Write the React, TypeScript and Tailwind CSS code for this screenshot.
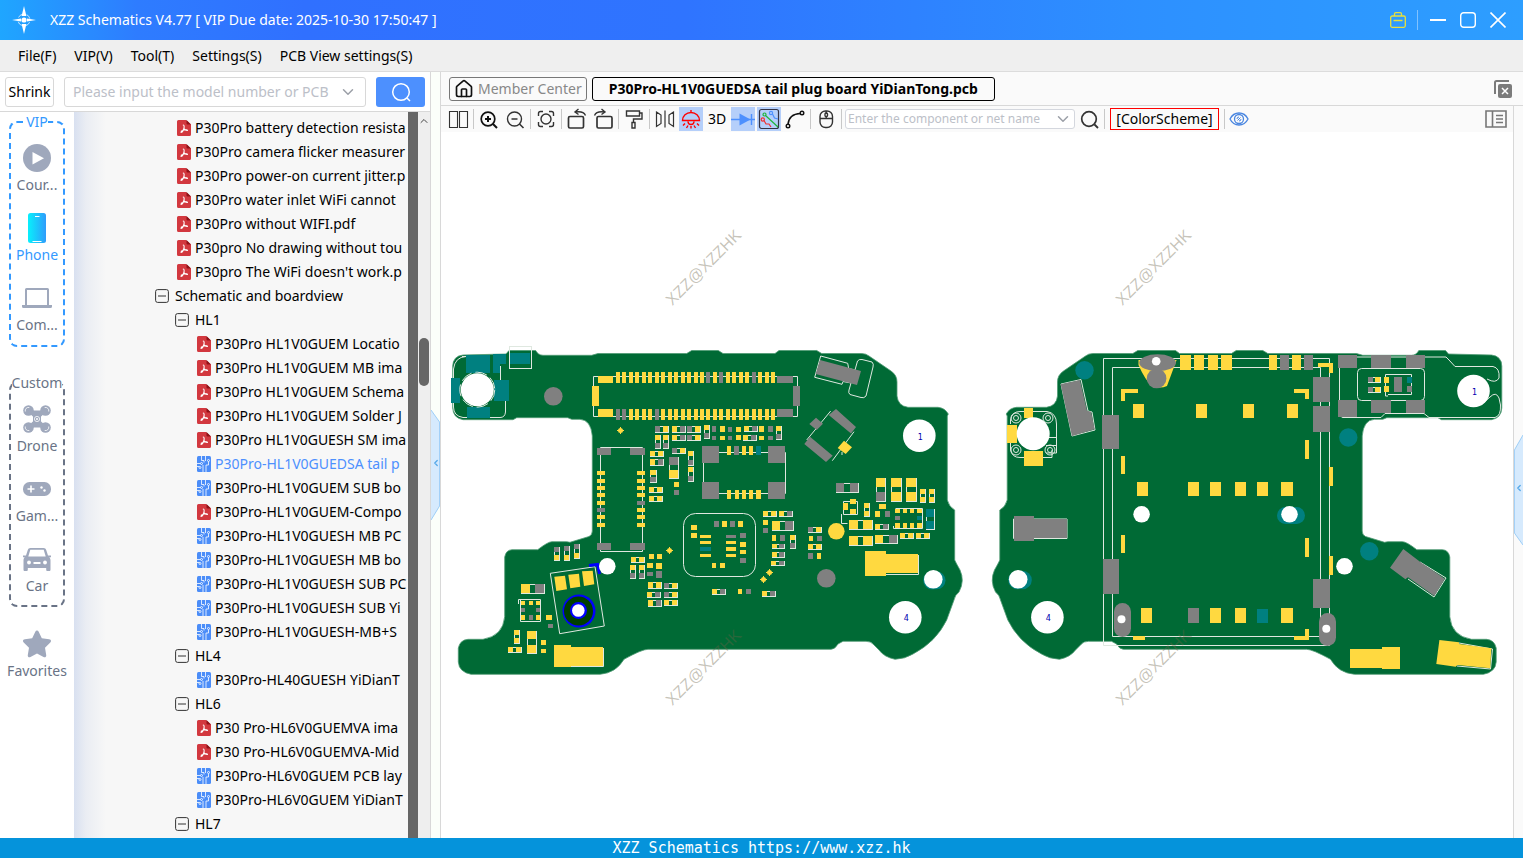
import React, { useState } from 'react';
import { ChevronDown, ChevronLeft, ChevronUp, House } from 'lucide-react';
import clsx from 'clsx';

type TreeKind = 'pdf' | 'pcb' | 'folder';

interface TreeItem {
    kind: TreeKind;
    label: string;
    level: number;
}

const TREE: TreeItem[] = [
    { kind: 'pdf', level: 1, label: 'P30Pro battery detection resista' },
    { kind: 'pdf', level: 1, label: 'P30Pro camera flicker measurer' },
    { kind: 'pdf', level: 1, label: 'P30Pro power-on current jitter.p' },
    { kind: 'pdf', level: 1, label: 'P30Pro water inlet WiFi cannot' },
    { kind: 'pdf', level: 1, label: 'P30Pro without WIFI.pdf' },
    { kind: 'pdf', level: 1, label: 'P30pro No drawing without tou' },
    { kind: 'pdf', level: 1, label: "P30pro The WiFi doesn't work.p" },
    { kind: 'folder', level: 0, label: 'Schematic and boardview' },
    { kind: 'folder', level: 1, label: 'HL1' },
    { kind: 'pdf', level: 2, label: 'P30Pro HL1V0GUEM Locatio' },
    { kind: 'pdf', level: 2, label: 'P30Pro HL1V0GUEM MB ima' },
    { kind: 'pdf', level: 2, label: 'P30Pro HL1V0GUEM Schema' },
    { kind: 'pdf', level: 2, label: 'P30Pro HL1V0GUEM Solder J' },
    { kind: 'pdf', level: 2, label: 'P30Pro HL1V0GUESH SM ima' },
    { kind: 'pcb', level: 2, label: 'P30Pro-HL1V0GUEDSA tail p' },
    { kind: 'pcb', level: 2, label: 'P30Pro-HL1V0GUEM SUB bo' },
    { kind: 'pdf', level: 2, label: 'P30Pro-HL1V0GUEM-Compo' },
    { kind: 'pcb', level: 2, label: 'P30Pro-HL1V0GUESH MB PC' },
    { kind: 'pcb', level: 2, label: 'P30Pro-HL1V0GUESH MB bo' },
    { kind: 'pcb', level: 2, label: 'P30Pro-HL1V0GUESH SUB PC' },
    { kind: 'pcb', level: 2, label: 'P30Pro-HL1V0GUESH SUB Yi' },
    { kind: 'pcb', level: 2, label: 'P30Pro-HL1V0GUESH-MB+S' },
    { kind: 'folder', level: 1, label: 'HL4' },
    { kind: 'pcb', level: 2, label: 'P30Pro-HL40GUESH YiDianT' },
    { kind: 'folder', level: 1, label: 'HL6' },
    { kind: 'pdf', level: 2, label: 'P30 Pro-HL6V0GUEMVA ima' },
    { kind: 'pdf', level: 2, label: 'P30 Pro-HL6V0GUEMVA-Mid' },
    { kind: 'pcb', level: 2, label: 'P30Pro-HL6V0GUEM PCB lay' },
    { kind: 'pcb', level: 2, label: 'P30Pro-HL6V0GUEM YiDianT' },
    { kind: 'folder', level: 1, label: 'HL7' },
];

const MENUS = ['File(F)', 'VIP(V)', 'Tool(T)', 'Settings(S)', 'PCB View settings(S)'];

/* ---------- small icons ---------- */

function LogoIcon() {
    return (
        <svg viewBox="0 0 24 28" className="h-7 w-6" fill="#fff">
            <path d="M12 0l2.4 10h-4.8zM12 28l2.4-10h-4.8zM0 14l9-1.6v3.2zM24 14l-9-1.6v3.2z" />
            <circle cx="12" cy="14" r="2.6" />
            <circle cx="12" cy="14" r="6" fill="none" stroke="#fff" strokeOpacity=".7" strokeDasharray="5 4.4" strokeDashoffset="-2.2" />
        </svg>
    );
}

function PdfIcon() {
    return (
        <svg viewBox="0 0 14 16" className="h-4 w-[14px] shrink-0">
            <path d="M1.5 0H9l5 4.5v10A1.5 1.5 0 0 1 12.500 16h-11A1.500 1.500 0 0 1 0 14.500v-13A1.500 1.500 0 0 1 1.500 0z" fill="#d2383f" />
            <path d="M9.500 0L14 4.500H10.500a1 1 0 0 1-1-1z" fill="#8f1218" />
            <path d="M6.300 5c1.200 0 .9 2.700.4 4-.5 1.400-1.700 3.500-2.700 3.500M6.900 8.600c.8 1.200 2 2 3.600 1.800M4.200 11.300c1.600-1.200 3.600-1.800 5.800-1.500" fill="none" stroke="#fff" strokeWidth="1.100" strokeLinecap="round" />
        </svg>
    );
}

function PcbIcon() {
    return (
        <svg viewBox="0 0 14 16" className="h-4 w-[14px] shrink-0">
            <rect width="14" height="16" rx="1.500" fill="#4b8df8" />
            <g fill="none" stroke="#fff" strokeWidth=".8">
                <path d="M4.500 0v4.500h2.500v2M0 7.500h3.500M8.500 0v5M11.500 5.500v3.500h-2.500V16M6 9v7M0 10.500h2.500" />
                <circle cx="11.500" cy="4.500" r="1" />
                <circle cx="4.500" cy="7.500" r="1" />
                <circle cx="3" cy="11.500" r="1" />
            </g>
        </svg>
    );
}

function MinusBox() {
    return (
        <svg viewBox="0 0 14 14" className="h-[14px] w-[14px] shrink-0" fill="none" stroke="#333">
            <rect x=".6" y=".6" width="12.800" height="12.800" rx="2" />
            <path d="M3 7h8" />
        </svg>
    );
}

function SideIcon({ name }: { name: string }) {
    switch (name) {
        case 'course':
            return (
                <svg viewBox="0 0 28 28" className="size-7">
                    <circle cx="14" cy="14" r="14" fill="#9fa8bc" />
                    <path d="M9.500 8v12.500L21 14.200z" fill="#fff" />
                </svg>
            );
        case 'phone':
            return (
                <svg viewBox="0 0 18 30" className="h-[30px] w-[18px]">
                    <defs>
                        <linearGradient id="ph">
                            <stop offset="0" stopColor="#08f0fc" />
                            <stop offset="1" stopColor="#2f9cfb" />
                        </linearGradient>
                    </defs>
                    <rect width="18" height="30" rx="2.500" fill="url(#ph)" />
                    <path d="M7 3.500h4.500M4.500 28.500h9" stroke="#fff" strokeWidth="1.200" />
                </svg>
            );
        case 'computer':
            return (
                <svg viewBox="0 0 30 20" className="h-5 w-[30px]" fill="#9fa8bc">
                    <path d="M4.500 0h21A1.500 1.500 0 0 1 27 1.500V17h3v1.500a1.500 1.500 0 0 1-1.500 1.500h-27A1.500 1.500 0 0 1 0 18.500V17h3V1.500A1.500 1.500 0 0 1 4.500 0zM5 2v15h20V2z" fillRule="evenodd" />
                </svg>
            );
        case 'drone':
            return (
                <svg viewBox="0 0 28 28" className="size-7" fill="#9fa8bc">
                    <circle cx="5.500" cy="5.500" r="5.300" />
                    <circle cx="22.500" cy="5.500" r="5.300" />
                    <circle cx="5.500" cy="22.500" r="5.300" />
                    <circle cx="22.500" cy="22.500" r="5.300" />
                    <path d="M5.500 5.500L11 10.500h6l5.500-5M5.500 22.500L11 17.500h6l5.500 5" stroke="#9fa8bc" strokeWidth="3" />
                    <path d="M10 10h8v8h-8z" />
                    <g fill="none" stroke="#fff" strokeWidth=".8">
                        <path d="M2.300 6.500a3.300 3.300 0 0 1 4-4M21.700 2.500a3.300 3.300 0 0 1 4 4M2.300 21.500a3.300 3.300 0 0 0 4 4M25.700 21.500a3.300 3.300 0 0 1-4 4" />
                        <circle cx="14" cy="14" r="2.600" />
                    </g>
                    <circle cx="14" cy="14" r="1" fill="#fff" />
                </svg>
            );
        case 'game':
            return (
                <svg viewBox="0 0 28 14" className="h-[14px] w-7">
                    <rect width="28" height="14" rx="6.500" fill="#9fa8bc" />
                    <path d="M4.500 7h7M8 3.500v7" stroke="#fff" strokeWidth="1.600" />
                    <circle cx="18.500" cy="5.500" r="1.200" fill="#fff" />
                    <circle cx="21.500" cy="8.500" r="1.200" fill="#fff" />
                </svg>
            );
        case 'car':
            return (
                <svg viewBox="0 0 28 23" className="h-[23px] w-7" fill="#9fa8bc">
                    <path d="M7.500 0h13c1.500 0 2.300.8 2.800 2.200L25 7.500h3v1.700h-1.700c.9.900 1.200 1.800 1.200 3V21.500c0 1-.5 1.500-1.300 1.500h-1.700c-.8 0-1.300-.5-1.300-1.500V20H4.800v1.500c0 1-.5 1.500-1.300 1.500H1.800C1 23 .5 22.500.5 21.500v-9.300c0-1.200.3-2.100 1.200-3H0V7.500h3l1.700-5.300C5.200.8 6 0 7.500 0zM7.300 1.800L5.300 8.500h17.400l-2-6.700z" fillRule="evenodd" />
                    <circle cx="6" cy="14.500" r="1.900" fill="#fff" />
                    <circle cx="22" cy="14.500" r="1.900" fill="#fff" />
                    <path d="M10.500 15h7" stroke="#fff" strokeWidth="2" />
                </svg>
            );
        default:
            return (
                <svg viewBox="0 0 28 28" className="size-7" fill="#9fa8bc">
                    <path d="M14 .5c.8 0 1.300.4 1.700 1.200l3.100 6.600 7.300 1c1.900.3 2.500 1.800 1.200 3.200L22 17.700l1.200 7.300c.3 1.900-1 2.900-2.700 2L14 23.600 7.500 27c-1.700.9-3-.1-2.700-2L6 17.700.7 12.500C-.6 11.100 0 9.600 1.900 9.300l7.300-1 3.100-6.600C12.700.9 13.200.5 14 .5z" />
                </svg>
            );
    }
}

interface SideItemProps {
    icon: string;
    label: string;
    active?: boolean;
}

function SideItem({ icon, label, active }: SideItemProps) {
    return (
        <button className="flex w-full flex-col items-center">
            <span className="flex h-[34px] items-center">
                <SideIcon name={icon} />
            </span>
            <span className={clsx('leading-5', active ? 'text-[#3399ff]' : 'text-[#697386]')}>{label}</span>
        </button>
    );
}

/* ---------- toolbar ---------- */

interface ToolProps {
    label: string;
    active?: boolean;
    children: React.ReactNode;
}

function Tool({ label, active, children }: ToolProps) {
    return (
        <button aria-label={label} className={clsx('flex size-6 shrink-0 items-center justify-center', active && 'bg-[#b5cffa]')}>
            <svg viewBox="0 0 24 24" className="size-6" fill="none" stroke="#333" strokeWidth="1.400">
                {children}
            </svg>
        </button>
    );
}

function Sep() {
    return <span className="mx-px h-5 w-px shrink-0 bg-[#c8c8c8]" />;
}

function Toolbar() {
    const [query, setQuery] = useState('');

    return (
        <div className="flex h-[26px] items-center gap-0.5 bg-[#fafafa] pl-[5px] pr-1.5">
            <Tool label="Split view">
                <path d="M3.500 4.500h8v16h-8zM13.500 4.500h8v16h-8z" strokeWidth="1.100" />
            </Tool>
            <Sep />
            <Tool label="Zoom in">
                <circle cx="11" cy="12" r="6.800" stroke="#111" strokeWidth="1.700" />
                <path d="M16 17l4 4M11 9v6M8 12h6" stroke="#111" strokeWidth="2" />
            </Tool>
            <Tool label="Zoom out">
                <circle cx="11.500" cy="12" r="7" />
                <path d="M16.500 17l4 4M8.500 12h6" strokeWidth="1.600" />
            </Tool>
            <Sep />
            <Tool label="Fit to window">
                <path d="M4.500 9V6.500a2 2 0 0 1 2-2H9M15 4.500h2.500a2 2 0 0 1 2 2V9M19.500 15v2.500a2 2 0 0 1-2 2H15M9 19.500H6.500a2 2 0 0 1-2-2V15" />
                <circle cx="12" cy="12" r="5" />
            </Tool>
            <Sep />
            <Tool label="Rotate left">
                <rect x="3.500" y="9.500" width="15" height="11.500" rx="1.500" strokeWidth="1.700" />
                <path d="M20.500 8.500C19 5 15 4.300 10.500 5M13.500 2l-3.500 3 3.500 2.500" />
            </Tool>
            <Tool label="Rotate right">
                <rect x="6" y="9.500" width="15" height="11.500" rx="1.500" strokeWidth="1.700" />
                <path d="M3.500 8.500C5 5 9 4.300 13.500 5M10.500 2l3.500 3-3.500 2.500" />
            </Tool>
            <Sep />
            <Tool label="Paint">
                <path d="M4.500 4h13v5h-13zM17.500 6H20v6h-8.500v4" />
                <path d="M10 15.500h3V21h-3z" />
            </Tool>
            <Sep />
            <Tool label="Mirror">
                <path d="M3.500 5l4.500 3v8.500l-4.500 3zM20.500 5L16 8v8.500l4.500 3zM12 3.500v17" strokeWidth="1.200" />
            </Tool>
            <Tool label="Light" active>
                <g stroke="#f00">
                    <path d="M3.500 13.500a8.500 8 0 0 1 17 0zM12 3v2.500M9 14.500a3 3 0 0 0 6 0M6 16.500L4 18.500M18 16.500l2 2M9 18.500l-1.500 2.500M15 18.500l1.500 2.500M12 19v2.500" strokeWidth="1.400" />
                </g>
            </Tool>
            <button className="size-6 shrink-0 text-center leading-6">3D</button>
            <Tool label="Diode" active>
                <path d="M0 12.500h24M20.500 7v11" stroke="#4d90fe" />
                <path d="M8.500 6.500v12l11-6z" fill="#4d90fe" stroke="none" />
            </Tool>
            <Tool label="Color nets" active>
                <g strokeWidth="1.200">
                    <rect x="2.500" y="2.500" width="19" height="19" rx="2" stroke="#334" />
                    <circle cx="7.500" cy="7.500" r="1.500" stroke="#1fb53a" />
                    <path d="M8.500 8.500L21 20" stroke="#1fb53a" />
                    <circle cx="14" cy="6" r="1.600" stroke="#4d90fe" />
                    <path d="M15.500 7l2 4 3.500 1" stroke="#4d90fe" />
                    <circle cx="5.800" cy="12.500" r="1.600" stroke="#f03030" />
                    <path d="M7 13.500l2 3.500h3l2 3" stroke="#f03030" />
                </g>
            </Tool>
            <Tool label="Curve">
                <path d="M5 17.500C5.500 11 10 6.800 17.500 6.500" stroke="#111" strokeWidth="1.500" />
                <circle cx="5" cy="19" r="1.800" stroke="#111" />
                <circle cx="19" cy="6" r="1.800" stroke="#111" />
            </Tool>
            <Sep />
            <Tool label="Mouse">
                <rect x="6" y="4" width="12.500" height="16.500" rx="5.500" />
                <path d="M6 11.500h12.500M12.200 4v3M12.200 9v2.500" />
                <rect x="11" y="6" width="2.500" height="3.500" rx="1" />
            </Tool>
            <Sep />
            <div className="flex h-5 w-[230px] shrink-0 items-center rounded-[3px] border border-[#d4d7de] bg-white px-0.5">
                <input
                    aria-label="Component or net name"
                    value={query}
                    onChange={(e) => setQuery(e.target.value)}
                    placeholder="Enter the component or net name"
                    className="min-w-0 flex-1 bg-transparent text-xs outline-none placeholder:text-[#bcc0c8]"
                />
                <button aria-label="Show history" className="ml-1">
                    <ChevronDown className="size-[18px] text-[#9ca0a8]" />
                </button>
            </div>
            <Tool label="Search">
                <circle cx="12" cy="12" r="7.300" strokeWidth="1.700" />
                <path d="M17.500 17.500l3.500 3.500" strokeWidth="1.800" />
            </Tool>
            <Sep />
            <button className="mx-0.5 h-[22px] w-[109px] shrink-0 border border-[#f00] text-center leading-5">[ColorScheme]</button>
            <Sep />
            <Tool label="Show layers">
                <g stroke="#4a86e0" strokeWidth="1.300">
                    <path d="M2 12c4-8 14-8 18 0-4 8-14 8-18 0z" />
                    <circle cx="11" cy="12" r="4.500" />
                    <path d="M9.500 13.500l3-3M9 12a2 2 0 0 1 2-2M13 12a2 2 0 0 1-2 2" strokeWidth="1" />
                </g>
            </Tool>
            <button aria-label="Side panel" className="ml-auto">
                <svg viewBox="0 0 22 18" className="h-[18px] w-[22px]" fill="none" stroke="#777" strokeWidth="1.600">
                    <path d="M1 1h20v16H1zM7.500 1v16M11 5.500h7M11 9h7M11 12.500h7" />
                </svg>
            </button>
        </div>
    );
}

/* ---------- board drawing ---------- */

const COLORS: Record<string, string> = { y: '#ffd940', g: '#808080', t: '#008080' };

type Pad = [number, number, number, number, string];
type Part = [number, number, number, number, string];

const OUTLINE =
    'M452.700 366Q453 356 463 355L506 354L509 350.500H535.700Q538 355 543 355.300H591.700L598 353.500H686.700L691.700 350.500H718.300L723 353.500H775L779 350.500H816.700L821.700 353.500H861.700Q866 353.500 869 356L891 371Q897 375 897 382V396Q898 406 908 407.300H938Q945 408 948.300 414L947.300 416V500Q949 507 954.700 510V560Q956 563 960 570Q965 581 959 592Q955 595 954 600L946.700 620Q936 642 913 654Q905 659 895 659.300Q884 657 879 650L873 644Q871 641.500 866 641.300H843L838 644Q835 649.300 831 649.300H648Q642 649.300 624 659.300Q616 673 600 674.300H471Q459 672 458.300 662V648Q460 640 468 639.300H483Q503 636 504.700 616.700V557Q506 550 512 549.700H537.700Q548 541.700 552 541.700H566.700L570 542.300L589 536.500Q592.300 535 592.300 531V436Q591 420 580 419.300H571.700L567.700 417.700H516.700L513 419.700H463Q453 418 452.700 408Z';

// two-pad parts: x, y, w, h and the colours of both pads
const PARTS: Part[] = [
    [655, 426, 14, 7, 'gy'], [672, 426, 14, 7, 'yg'], [687, 426, 14, 7, 'gy'], [672, 435, 14, 6, 'yg'],
    [687, 435, 14, 6, 'gy'], [704, 425, 6, 14, 'yg'], [655, 435, 6, 14, 'yg'], [663, 435, 6, 14, 'yg'],
    [650, 451, 14, 6, 'yy'], [650, 459, 14, 7, 'yg'], [672, 448, 14, 6, 'gy'], [688, 451, 6, 15, 'yg'],
    [688, 467, 6, 15, 'yg'], [669, 457, 10, 22, 'gy'], [650, 470, 7, 13, 'yg'], [649, 487, 14, 6, 'yy'],
    [649, 496, 14, 6, 'yy'], [744, 426, 14, 6, 'yg'], [776, 426, 6, 14, 'yg'], [743, 435, 14, 6, 'yg'],
    [836, 483, 23, 10, 'gg'], [876, 478, 10, 24, 'yg'], [891, 478, 11, 24, 'yy'], [906, 478, 11, 24, 'yy'],
    [920, 489, 6, 14, 'yy'], [929, 489, 6, 14, 'yy'], [864, 503, 6, 14, 'yy'], [763, 511, 14, 6, 'yy'],
    [779, 511, 14, 6, 'yg'], [772, 521, 22, 10, 'yg'], [790, 535, 6, 14, 'yg'], [772, 544, 13, 5, 'yg'],
    [772, 552, 13, 6, 'yg'], [771, 561, 14, 5, 'yg'], [808, 527, 14, 6, 'gy'], [808, 544, 14, 6, 'yy'],
    [849, 520, 24, 10, 'yy'], [849, 536, 24, 10, 'yy'], [875, 524, 14, 6, 'yg'], [875, 535, 23, 9, 'yg'],
    [900, 533, 14, 6, 'yy'], [916, 533, 14, 6, 'yy'], [712, 589, 14, 6, 'yg'], [762, 591, 14, 6, 'yg'],
    [554, 547, 6, 14, 'gy'], [564, 546, 6, 15, 'gy'], [574, 544, 6, 15, 'gy'], [521, 584, 24, 10, 'yg'],
    [514, 630, 6, 14, 'yy'], [527, 631, 10, 23, 'yy'], [508, 647, 14, 6, 'yy'], [631, 557, 14, 6, 'yy'],
    [630, 565, 6, 14, 'yg'], [639, 565, 6, 14, 'yg'], [648, 582, 14, 7, 'yy'], [664, 583, 14, 6, 'gy'],
    [647, 592, 14, 6, 'yg'], [664, 592, 14, 6, 'gy'], [648, 600, 14, 7, 'yg'], [664, 600, 14, 6, 'yy'],
    [926, 509, 9, 21, 'tt'], [1368, 377, 13, 6, 'gy'], [1368, 387, 13, 6, 'gy'],
];

const LEFT_PADS: Pad[] = [
    [466, 355, 24, 18, 't'], [493, 354, 13, 10, 't'], [493, 363, 7, 10, 't'], [510, 353, 20, 11, 't'],
    [451, 378, 9, 25, 't'], [494, 380, 15, 21, 't'], [467, 407, 23, 11, 't'],
    [598, 376, 15, 7, 'y'], [592, 386, 7, 20, 'y'], [598, 409, 15, 8, 'y'],
    [777, 376, 16, 7, 'g'], [793, 386, 7, 20, 'g'], [777, 409, 16, 8, 'g'],
    [597, 448, 14, 7, 'g'], [630, 448, 15, 7, 'g'], [597, 543, 14, 7, 'g'], [630, 543, 15, 7, 'g'],
    [674, 482, 5, 5, 'y'], [674, 490, 5, 5, 'g'],
    [702, 446, 17, 17, 'g'], [768, 446, 17, 17, 'g'], [702, 482, 17, 17, 'g'], [768, 482, 17, 17, 'g'],
    [727, 446, 4, 9, 'y'], [734, 446, 5, 9, 'g'], [742, 446, 4, 9, 'y'], [749, 446, 4, 9, 'y'], [756, 446, 5, 9, 't'],
    [727, 490, 4, 9, 'y'], [735, 490, 4, 9, 'y'], [742, 490, 4, 9, 'y'], [749, 490, 4, 9, 'y'], [756, 490, 5, 9, 'y'],
    [712, 426, 4, 6, 'g'], [720, 426, 5, 6, 'y'], [728, 427, 4, 5, 'g'], [736, 427, 5, 5, 'y'], [759, 426, 5, 6, 'y'], [768, 426, 5, 6, 'g'],
    [712, 436, 4, 4, 'g'], [720, 436, 5, 4, 'y'], [728, 436, 4, 4, 'g'], [736, 435, 5, 5, 'y'], [759, 436, 5, 4, 'y'], [768, 436, 5, 4, 'g'],
    [843, 503, 5, 7, 'y'], [850, 499, 6, 5, 'y'], [850, 509, 6, 5, 'y'],
    [879, 504, 7, 5, 'y'], [875, 511, 5, 6, 'y'], [885, 511, 5, 6, 'g'],
    [895, 509, 5, 4, 'y'], [903, 509, 4, 4, 'y'], [910, 509, 4, 4, 'y'], [917, 509, 5, 4, 'y'],
    [895, 523, 5, 5, 'y'], [903, 523, 4, 5, 'y'], [910, 523, 4, 5, 'y'], [917, 523, 5, 5, 'y'],
    [895, 516, 5, 4, 'g'], [917, 516, 5, 4, 't'],
    [763, 520, 5, 5, 'y'], [763, 528, 5, 5, 'g'], [772, 535, 4, 6, 'y'], [780, 535, 5, 6, 'g'],
    [809, 536, 4, 5, 'y'], [817, 536, 5, 5, 'g'], [808, 553, 5, 6, 'g'], [817, 553, 4, 6, 'y'],
    [865, 551, 21, 25, 'y'], [886, 554, 32, 19, 'y'],
    [691, 525, 6, 5, 'y'], [691, 533, 6, 5, 'y'], [700, 535, 11, 3, 'y'], [700, 541, 11, 3, 'y'], [700, 547, 11, 4, 't'], [700, 554, 11, 3, 'y'],
    [712, 563, 4, 5, 'y'], [720, 563, 5, 5, 'y'], [714, 521, 5, 6, 'g'], [722, 521, 5, 6, 'y'], [730, 521, 5, 6, 'g'], [738, 521, 5, 6, 'y'],
    [726, 535, 10, 3, 'g'], [726, 541, 10, 3, 'y'], [726, 547, 10, 4, 'y'], [726, 554, 10, 3, 'y'],
    [740, 533, 6, 5, 'g'], [740, 542, 6, 5, 'y'], [740, 550, 6, 4, 'y'], [740, 558, 6, 5, 'g'],
    [738, 589, 4, 5, 'y'], [746, 589, 5, 5, 'g'],
    [521, 601, 4, 4, 'y'], [529, 601, 4, 4, 'y'], [536, 601, 4, 4, 'y'], [521, 608, 4, 4, 'g'], [536, 608, 4, 4, 'g'],
    [521, 615, 4, 5, 'y'], [529, 615, 4, 5, 'g'], [536, 615, 4, 5, 'y'], [546, 615, 6, 5, 'y'], [548, 624, 5, 4, 'g'],
    [541, 640, 5, 5, 'y'], [541, 649, 5, 4, 'y'], [554, 645, 17, 22, 'y'], [571, 647, 32, 19, 'y'],
    [649, 554, 5, 5, 'y'], [657, 554, 5, 5, 'y'], [647, 563, 6, 5, 'y'], [656, 563, 6, 6, 'y'], [647, 572, 6, 4, 'g'], [656, 571, 6, 7, 'g'],
];

const RIGHT_PADS: Pad[] = [
    [1024, 408, 9, 10, 'y'], [1007, 425, 10, 18, 'y'], [1024, 451, 19, 15, 'y'],
    [1014, 516, 20, 25, 'g'], [1034, 519, 33, 19, 'g'],
    [1102, 415, 17, 34, 'g'], [1103, 559, 16, 35, 'g'], [1313, 377, 17, 25, 'g'], [1313, 406, 17, 26, 'g'], [1313, 579, 17, 29, 'g'],
    [1180, 355, 11, 15, 'y'], [1194, 355, 10, 15, 'y'], [1208, 355, 10, 15, 'y'], [1221, 355, 11, 15, 'y'],
    [1269, 355, 8, 15, 'y'], [1280, 355, 9, 15, 'g'], [1292, 355, 9, 15, 'y'], [1304, 355, 9, 15, 'g'],
    [1121, 389, 17, 4, 'y'], [1121, 389, 4, 12, 'y'], [1294, 389, 15, 4, 'y'], [1305, 389, 4, 10, 'y'],
    [1318, 363, 15, 4, 'y'], [1329, 363, 4, 10, 'y'], [1294, 636, 15, 4, 'y'], [1305, 629, 4, 10, 'y'], [1133, 636, 12, 4, 'y'],
    [1121, 456, 4, 18, 'y'], [1121, 535, 4, 18, 'y'], [1305, 440, 4, 19, 'y'], [1305, 538, 4, 19, 'y'], [1329, 467, 4, 19, 'y'], [1329, 556, 4, 19, 'y'],
    [1133, 404, 11, 14, 'y'], [1196, 404, 11, 14, 'y'], [1243, 404, 11, 14, 'y'], [1287, 404, 11, 14, 'y'],
    [1137, 482, 11, 14, 'y'], [1188, 482, 11, 14, 'y'], [1210, 482, 11, 14, 'y'], [1235, 482, 11, 14, 'y'], [1257, 482, 11, 14, 'y'], [1281, 482, 12, 14, 'y'],
    [1141, 608, 11, 15, 'y'], [1188, 608, 11, 15, 'g'], [1210, 608, 11, 15, 'y'], [1235, 608, 11, 15, 'y'], [1257, 609, 11, 14, 't'], [1281, 608, 12, 15, 'y'],
    [1338, 355, 19, 13, 'g'], [1371, 355, 20, 13, 'g'], [1406, 355, 19, 13, 'g'], [1338, 400, 19, 17, 'g'], [1371, 400, 20, 13, 'g'], [1406, 400, 19, 13, 'g'],
    [1384, 377, 5, 6, 'y'], [1384, 386, 5, 6, 'y'], [1394, 377, 8, 15, 'g'], [1407, 377, 5, 6, 't'], [1407, 386, 5, 6, 'g'],
    [1350, 649, 32, 19, 'y'], [1382, 647, 18, 22, 'y'],
];

function Pads({ pads }: { pads: Pad[] }) {
    return (
        <>
            {pads.map(([x, y, w, h, c], i) => (
                <rect key={i} x={x} y={y} width={w} height={h} fill={COLORS[c]} />
            ))}
        </>
    );
}

function TwoPad({ part }: { part: Part }) {
    const [x, y, w, h, c] = part;
    const wide = w > h;
    const pw = wide ? Math.round(w * 0.36) : w - 1;
    const ph = wide ? h - 1 : Math.round(h * 0.36);
    return (
        <g>
            <rect x={x + 0.5} y={y + 0.5} width={w - 1} height={h - 1} fill="none" stroke="#dfe8e0" />
            <rect x={x} y={y} width={pw} height={ph} fill={COLORS[c[0]]} />
            <rect x={wide ? x + w - pw - 1 : x} y={wide ? y : y + h - ph - 1} width={pw} height={ph} fill={COLORS[c[1]]} />
        </g>
    );
}

function ConnectorPins() {
    const topGray = [14, 16, 21];
    const bottomGray = [0, 1, 6];
    return (
        <>
            {Array.from({ length: 25 }, (_, i) => {
                const x = Math.round(616 + i * 6.46);
                return (
                    <g key={i}>
                        <rect x={x} y="372" width="4" height="11" fill={topGray.includes(i) ? COLORS.g : COLORS.y} />
                        <rect x={x} y="409" width="4" height="11" fill={bottomGray.includes(i) ? COLORS.g : COLORS.y} />
                    </g>
                );
            })}
            {[471, 479, 486, 493, 501, 508, 515, 523].map((y, i) => (
                <g key={y}>
                    <rect x="597" y={y} width="8" height="4" fill={i === 5 ? COLORS.g : COLORS.y} />
                    <rect x="637" y={y} width="8" height="4" fill={i === 4 ? COLORS.g : COLORS.y} />
                </g>
            ))}
        </>
    );
}

function Hole({ x, y, r, label }: { x: number; y: number; r: number; label?: string }) {
    return (
        <>
            <circle cx={x} cy={y} r={r} fill="#fff" />
            {label && (
                <text x={x + 1} y={y + 4} textAnchor="middle" fontSize="8" fill="#0000b0" fontFamily="DejaVu Sans">
                    {label}
                </text>
            )}
        </>
    );
}

function BoardView() {
    return (
        <svg viewBox="441 132 1072 706" className="h-full w-full" role="img" aria-label="Board view">
            <g fill="#006a35" stroke="#4f9a74" strokeWidth=".8">
                <path d={OUTLINE} />
                <path d={OUTLINE} transform="translate(1954.500 0) scale(-1 1)" />
            </g>

            {/* silkscreen */}
            <g fill="none" stroke="#dfe8e0">
                <path d="M462 356.500H490M500.500 366V381M505.500 401V412Q505 417.500 500 417.500H463Q453.500 416 453.500 407V369Q455 357 466 356.500" />
                <rect x="509.500" y="346.500" width="22" height="22" />
                <path d="M593.500 376.500H797.500V416.500H593.500z" />
                <path d="M600.500 447.500H642.500V551.500H600.500z" />
                <path d="M703.500 452.500H785.500V493.500H703.500z" />
                <rect x="683.500" y="513.500" width="72" height="63" rx="12" />
                <path d="M820.700 356L847.700 363.300L848.700 368.500L855 370L857.500 361Q859 359 862 359.500L872 362Q874 364 873 367L866 396Q864 398.500 861 397.500L850 394.500Q848 393 849 390L851 383L843 381.500L842 384.300L814.700 377.300Z" />
                <path d="M806.700 440L830.700 411M832.300 460.700L854 431.700M842 452v3M841.500 514v9.500h6M843.500 501.500H857.500V514.500H843.500z" />
                <path d="M895.500 508.500H922.500V528.500H893.500V526" />
                <path d="M886 574.500H918.500V555" />
                <path d="M550.300 573.300L595 566.700L604.300 626L559.700 633.700Z" />
                <path d="M518.500 604V599.500H540.500V621.500H520.500V600M571 666.500H603.500V648" />
                <path d="M1103.500 358.500H1329.500V645.500H1103.500zM1112.500 367.500H1320.500V636.500H1112.500z" />
                <path d="M1010.500 424V420Q1012 411.500 1020 411.500H1047Q1056.500 413 1056.500 424V453H1046M1049 437.500H1056M1046 445.500H1056M1010.500 443V450Q1012 457.500 1020 457.500H1024M1043 457.500H1052V450" />
                {[[1016, 418], [1048, 418], [1016, 450], [1050, 450]].map(([x, y]) => (
                    <g key={`${x}-${y}`}>
                        <circle cx={x} cy={y} r="5" />
                        <circle cx={x} cy={y} r="2.500" />
                    </g>
                ))}
                <path d="M1013.500 519H1067V538.500H1013.500zM1061 384L1081 379.500L1088 411L1092 412L1095 430L1072 436Z" />
                <path d="M1455 366.500H1493Q1500 368 1499 378Q1496 384 1487 379M1455 366.500L1449 360L1446 357H1340Q1339.500 357 1339.500 360V412Q1340 417.500 1343 417.500H1381L1385 413.500H1424L1429 417.500H1495Q1501 416 1500.500 405L1499 398Q1496 391 1490 397L1481 405" />
                <rect x="1357.500" y="368.500" width="67" height="32" rx="4" />
                <path d="M1388 394.500H1411.500V374.500H1385.500V396H1388" />
                <path d="M1420 562L1446 578L1434 597L1408 579M1459 643L1492.500 649L1490.500 669L1457 666" />
            </g>

            {PARTS.map((part, i) => (
                <TwoPad key={i} part={part} />
            ))}
            <Pads pads={LEFT_PADS} />
            <ConnectorPins />

            {/* rotated parts, left side */}
            <path d="M820 360L861 371L857 385L815.700 374ZM836 409L856 427L851 433.500L828.700 415ZM810 436.700L832.700 455.700L826 462L804.300 444ZM816 417.700L823 423.700L816.700 430L809.300 424Z" fill="#808080" />
            <path d="M844 440.700L852 447.300L845.700 454L837.700 448ZM554.300 576.700L565 575.700L567 589.300L556.300 591ZM568.300 574.700L579 573.700L580.300 586.700L570.300 588.300ZM582 571.300L592.700 570.700L594.300 584.300L584 586Z" fill="#ffd940" />
            <circle cx="553.300" cy="396.300" r="9.300" fill="#808080" />
            <circle cx="826.300" cy="578.300" r="9.300" fill="#808080" />
            <circle cx="836.300" cy="531.300" r="8.300" fill="#ffd940" />
            {[[620.500, 430.500], [669.500, 550.500], [769.500, 572.500], [763.500, 579.500]].map(([x, y]) => (
                <g key={x} fill="#ffd940">
                    <circle cx={x} cy={y} r="2.500" />
                    <path d={`M${x - 3.500} ${y}h7M${x} ${y - 3.500}v7`} stroke="#ffd940" />
                </g>
            ))}

            {/* selected pad */}
            <path d="M589 565.500L597.500 564.500L599.500 574" fill="none" stroke="#00f" strokeWidth="3" />
            <circle cx="579" cy="611" r="16.500" fill="#00f" />
            <circle cx="578.500" cy="611" r="14.500" fill="#004000" />
            <circle cx="578.500" cy="610.500" r="8.500" fill="#00f" />
            <Hole x={578.300} y={610.500} r={6.300} />

            <circle cx="477.300" cy="389.700" r="17.500" fill="none" stroke="#dfe8e0" strokeDasharray="12 4" />
            <Hole x={477.300} y={389.700} r={16.500} />
            <Hole x={607.300} y={566.300} r={8.300} />
            <Hole x={919.300} y={435.700} r={16.300} label="1" />
            <circle cx="936.500" cy="580.300" r="9" fill="#008080" />
            <circle cx="932.500" cy="580.300" r="9.300" fill="#008080" />
            <Hole x={933.300} y={579.300} r={9.300} />
            <Hole x={905.300} y={617.300} r={16.300} label="4" />

            {/* right side */}
            <Pads pads={RIGHT_PADS} />
            <path d="M1060.700 384.300L1080 380L1087 410.700L1091 411.700L1094.700 429.300L1072 436L1067.500 416ZM1403.300 549L1420 561.700L1444.800 578.700L1434.300 596L1408 577.300L1405.400 579.300L1390 567.700Z" fill="#808080" />
            <path d="M1439.400 640L1459 642.300V644L1491.300 648.300L1490.300 668.300L1457.400 665L1455.700 666.700L1436.300 664ZM1138.500 360H1176.600L1167 386Q1160 389 1152 386Q1145 380 1138.500 365Z" fill="#ffd940" />
            <ellipse cx="1157.600" cy="362.700" rx="18.300" ry="8.500" fill="#808080" />
            <circle cx="1156.600" cy="378.500" r="9.800" fill="#808080" />
            <g fill="#008080">
                <circle cx="1084.500" cy="370.300" r="9.200" />
                <circle cx="1348.300" cy="437.500" r="9.200" />
                <circle cx="1369.300" cy="551.300" r="9.200" />
                <circle cx="1022.500" cy="580" r="9.300" />
                <circle cx="1017.500" cy="580" r="9.300" />
                <rect x="1277" y="507" width="28" height="17" rx="8.500" />
            </g>
            <rect x="1114" y="603" width="17" height="34" rx="8.500" fill="#808080" />
            <rect x="1319" y="613" width="17" height="33" rx="8.500" fill="#808080" />
            <Hole x={1156.200} y={361.300} r={4.300} />
            <Hole x={1121.500} y={619.300} r={4} />
            <Hole x={1326.300} y={628.700} r={4} />
            <Hole x={1033.200} y={433.700} r={16.500} />
            <Hole x={1018.200} y={579.300} r={9.300} />
            <Hole x={1047.400} y={617.300} r={16.300} label="4" />
            <Hole x={1141.600} y={514.300} r={8.300} />
            <Hole x={1289.500} y={514.300} r={8.300} />
            <Hole x={1344.500} y={566.300} r={8.300} />
            <Hole x={1473.500} y={391} r={16.300} label="1" />

            {/* watermark */}
            {[[703, 267], [1153, 267], [703, 667], [1153, 667]].map(([x, y]) => (
                <text
                    key={`${x}-${y}`}
                    transform={`translate(${x} ${y}) rotate(-45)`}
                    y="6"
                    textAnchor="middle"
                    fontSize="16"
                    fontFamily="Liberation Sans"
                    fill="#6b6348"
                    fillOpacity=".38"
                >
                    XZZ@XZZHK
                </text>
            ))}
        </svg>
    );
}

/* ---------- page ---------- */

function FoldHandle({ side }: { side: 'left' | 'right' }) {
    return (
        <button aria-label={side === 'left' ? 'Collapse file list' : 'Open side panel'} className="relative h-[110px] w-full">
            <svg viewBox="0 0 10 110" preserveAspectRatio="none" className="h-full w-full" fill="#d6eafd" stroke="#9accf7">
                <path d={side === 'left' ? 'M0 0L9.500 12V96L0 110' : 'M10 0L.5 15V98L10 110'} />
            </svg>
            <ChevronLeft className="absolute inset-x-0 top-12 mx-auto size-2.5 text-[#55a8e8]" strokeWidth={3} />
        </button>
    );
}

export default function App() {
    const [model, setModel] = useState('');
    const [selected, setSelected] = useState(14);

    return (
        <div className="flex h-screen flex-col overflow-hidden bg-white font-['Noto_Sans',sans-serif] text-sm text-black">
            {/* Title bar */}
            <header className="flex h-10 shrink-0 items-center bg-[linear-gradient(90deg,#1fa6ff_0%,#2e7cff_9%,#3070ff_20%,#2f74ff_45%,#2d90ff_75%,#2d9eff_100%)] pl-3 pr-[17px] text-white">
                <LogoIcon />
                <h1 className="ml-3.5">XZZ Schematics V4.77 [ VIP Due date: 2025-10-30 17:50:47 ]</h1>
                <div className="ml-auto flex items-center gap-3">
                    <button aria-label="Toolbox">
                        <svg viewBox="0 0 16 16" className="size-4" fill="none" stroke="#e8e03c" strokeWidth="1.300">
                            <rect x=".7" y="4" width="14.600" height="11.300" rx="1.500" />
                            <path d="M4.500 4V2a1.300 1.300 0 0 1 1.300-1.300h4.400A1.300 1.300 0 0 1 11.500 2v2M3.500 8.500h9" />
                        </svg>
                    </button>
                    <span className="-ml-px h-5 w-px bg-white/40" />
                    <button aria-label="Minimize">
                        <svg viewBox="0 0 16 16" className="size-4" stroke="#fff" strokeWidth="2"><path d="M0 8h16" /></svg>
                    </button>
                    <button aria-label="Maximize" className="ml-0.5">
                        <svg viewBox="0 0 16 16" className="size-4" fill="none" stroke="#fff" strokeWidth="1.400"><rect x=".7" y=".7" width="14.600" height="14.600" rx="3" /></svg>
                    </button>
                    <button aria-label="Close" className="ml-0.5">
                        <svg viewBox="0 0 16 16" className="size-4" stroke="#fff" strokeWidth="1.600"><path d="M.5.500l15 15M15.500.500l-15 15" /></svg>
                    </button>
                </div>
            </header>

            {/* Menu bar */}
            <nav className="flex h-8 shrink-0 items-center gap-[18px] border-b border-[#dcdcdc] bg-[#efefef] px-[18px] pt-px">
                {MENUS.map((menu) => (
                    <button key={menu}>{menu}</button>
                ))}
            </nav>

            <div className="flex min-h-0 flex-1">
                {/* File panel */}
                <aside className="flex w-[431px] shrink-0 flex-col border-r border-[#d8d8d8]">
                    <div className="flex h-10 shrink-0 items-center gap-2.5 border-b border-[#d8d8d8] px-[5px]">
                        <button className="h-[30px] w-[49px] rounded-[3px] border border-[#d8d8d8]">Shrink</button>
                        <div className="flex h-[30px] min-w-0 flex-1 items-center rounded-[3px] border border-[#d8d8d8] px-2">
                            <input
                                aria-label="Model number or PCB"
                                value={model}
                                onChange={(e) => setModel(e.target.value)}
                                placeholder="Please input the model number or PCB"
                                className="min-w-0 flex-1 bg-transparent outline-none placeholder:text-[#bcc0c8]"
                            />
                            <button aria-label="Show models">
                                <ChevronDown className="size-[18px] text-[#9ca0a8]" />
                            </button>
                        </div>
                        <button aria-label="Search" className="flex h-[30px] w-[49px] items-center justify-center rounded-[3px] bg-[#4d90fe]">
                            <svg viewBox="0 0 20 20" className="size-5" fill="none" stroke="#fff" strokeWidth="1.500">
                                <circle cx="10" cy="10" r="8.300" />
                                <path d="M16 16l3 3" />
                            </svg>
                        </button>
                    </div>

                    <div className="flex min-h-0 flex-1">
                        {/* Categories */}
                        <div className="flex w-[74px] shrink-0 flex-col items-center">
                            <fieldset className="h-[235px] w-14 rounded-lg border-2 border-dashed border-[#3399ff]">
                                <legend className="mx-auto leading-5 text-[#3399ff]">VIP</legend>
                                <div className="flex flex-col gap-4 pt-[9px]">
                                    <SideItem icon="course" label="Cour..." />
                                    <SideItem icon="phone" label="Phone" active />
                                    <SideItem icon="computer" label="Com..." />
                                </div>
                            </fieldset>
                            <fieldset className="mt-[26px] h-[234px] w-14 rounded-lg border-2 border-dashed border-[#697386]">
                                <legend className="mx-auto leading-5 text-[#697386]">Custom</legend>
                                <div className="flex flex-col gap-4 pt-[9px]">
                                    <SideItem icon="drone" label="Drone" />
                                    <SideItem icon="game" label="Gam..." />
                                    <SideItem icon="car" label="Car" />
                                </div>
                            </fieldset>
                            <div className="mt-5">
                                <SideItem icon="star" label="Favorites" />
                            </div>
                        </div>

                        {/* Tree */}
                        <div className="min-w-0 flex-1 overflow-hidden bg-[linear-gradient(90deg,#d8e0f0_0px,#eaedf3_12px,#f7f7f7_32px)] pt-1">
                            <ul>
                                {TREE.map((item, i) => (
                                    <li key={item.label}>
                                        <button
                                            onClick={() => setSelected(i)}
                                            className={clsx(
                                                'flex h-6 w-full items-center whitespace-nowrap',
                                                item.kind === 'folder' ? 'gap-1.5' : 'gap-1',
                                                item.level === 0 && 'pl-[81px]',
                                                item.level === 1 && (item.kind === 'folder' ? 'pl-[101px]' : 'pl-[103px]'),
                                                item.level === 2 && 'pl-[123px]',
                                                selected === i && 'text-[#4d90fe]'
                                            )}
                                        >
                                            {item.kind === 'folder' && <MinusBox />}
                                            {item.kind === 'pdf' && <PdfIcon />}
                                            {item.kind === 'pcb' && <PcbIcon />}
                                            {item.label}
                                        </button>
                                    </li>
                                ))}
                            </ul>
                        </div>
                        <div className="w-2.5 shrink-0 bg-[#666]" />
                        <div className="flex w-3 shrink-0 flex-col items-center bg-[#eee]">
                            <ChevronUp className="mt-0.5 h-3.5 w-3 text-[#444]" strokeWidth={2} />
                            <div className="mt-[210px] h-12 w-2.5 rounded-full bg-[#666]" />
                        </div>
                    </div>
                </aside>

                <div className="flex w-[9px] shrink-0 items-center bg-[#fbfffa] pt-5">
                    <FoldHandle side="left" />
                </div>

                {/* Board panel */}
                <main className="flex min-w-0 flex-1 flex-col border-l border-[#d8d8d8]">
                    <div className="flex h-[34px] shrink-0 items-center gap-[5px] border-b border-[#d8d8d8] bg-[#fafafa] pl-2 pr-[11px]">
                        <button className="flex h-6 items-center rounded-[3px] border border-[#777] px-1 text-[#888]">
                            <House className="mr-1 size-5 text-[#111]" strokeWidth={2} />
                            Member Center
                        </button>
                        <button className="h-6 rounded-[3px] border border-black px-4 font-bold leading-5">
                            P30Pro-HL1V0GUEDSA tail plug board YiDianTong.pcb
                        </button>
                        <button aria-label="Close all tabs" className="ml-auto">
                            <svg viewBox="0 0 18 18" className="size-[18px]" fill="none">
                                <path d="M1 14V2.500A1.500 1.500 0 0 1 2.500 1H15" stroke="#7b7b7b" strokeWidth="2" />
                                <rect x="4" y="4" width="14" height="14" rx="2" fill="#7b7b7b" />
                                <path d="M8 8l6 6M14 8l-6 6" stroke="#fff" strokeWidth="1.500" />
                            </svg>
                        </button>
                    </div>
                    <div className="flex min-h-0 flex-1">
                        <div className="flex min-w-0 flex-1 flex-col">
                            <Toolbar />
                            <div className="min-h-0 flex-1">
                                <BoardView />
                            </div>
                        </div>
                        <div className="flex w-2.5 shrink-0 items-center border-l border-[#d8d8d8] bg-[#fafafa] pt-9">
                            <FoldHandle side="right" />
                        </div>
                    </div>
                </main>
            </div>

            <footer className="h-5 shrink-0 bg-[#0593db] text-center font-['DejaVu_Sans_Mono',monospace] text-[15px] leading-5 text-white">
                XZZ Schematics https://www.xzz.hk
            </footer>
        </div>
    );
}
